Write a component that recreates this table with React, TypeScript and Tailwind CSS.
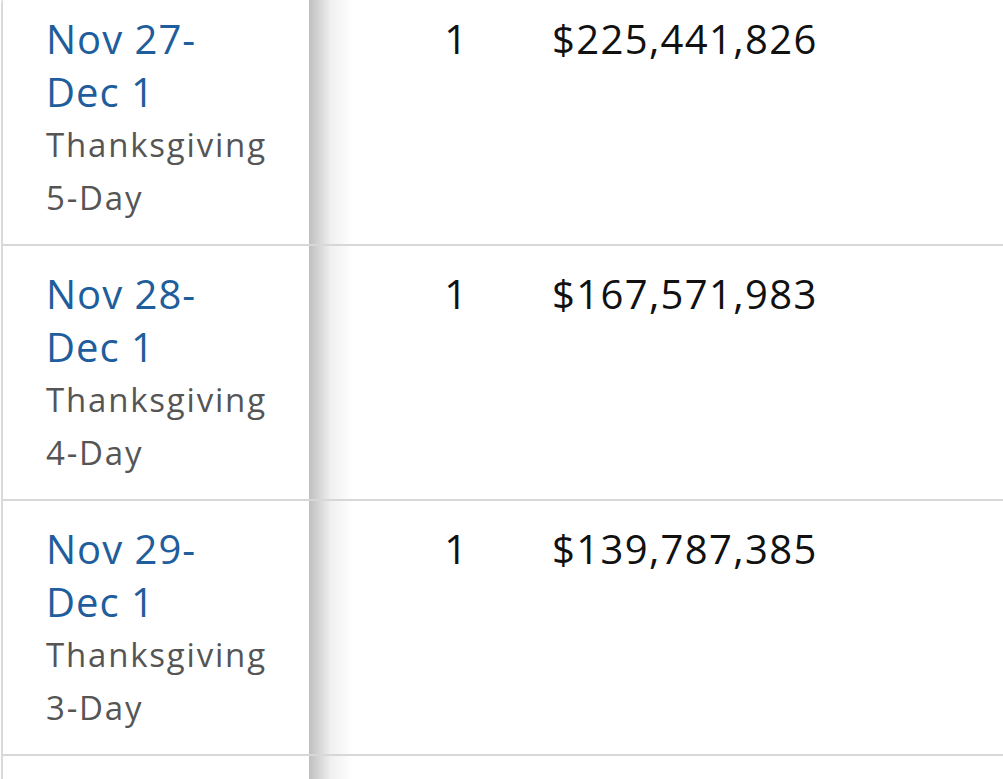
import React from "react";

type Weekend = {
  start: string;
  end: string;
  holiday: string;
  span: string;
  rank: number;
  gross: string;
};

const weekends: Weekend[] = [
  { start: "Nov 27-", end: "Dec 1", holiday: "Thanksgiving", span: "5-Day", rank: 1, gross: "$225,441,826" },
  { start: "Nov 28-", end: "Dec 1", holiday: "Thanksgiving", span: "4-Day", rank: 1, gross: "$167,571,983" },
  { start: "Nov 29-", end: "Dec 1", holiday: "Thanksgiving", span: "3-Day", rank: 1, gross: "$139,787,385" },
];

function WeekendRow({ row }: { row: Weekend }) {
  return (
    <div className="relative flex h-[255px] border-b-2 border-[#d7d7d7]">
      <div className="w-[306px] shrink-0 bg-white pl-[43px] pt-[21px]">
        <a href="#" className="block text-[40px] leading-[53px] tracking-[1px] text-[#1f5e9c]">
          {row.start}
          <br />
          {row.end}
        </a>
        <div className="text-[33px] leading-[53px] tracking-[1.8px] text-[#555555]">
          {row.holiday}
          <br />
          {row.span}
        </div>
      </div>
      <div className="w-[159px] shrink-0 pt-[21px] text-right text-[40px] leading-[53px] tracking-[1px] text-[#111111]">
        {row.rank}
      </div>
      <div className="pl-[84px] pt-[21px] text-[40px] leading-[53px] tracking-[1.35px] text-[#111111]">
        {row.gross}
      </div>
    </div>
  );
}

export default function App() {
  return (
    <div className="h-[779px] overflow-hidden bg-white font-['Open_Sans',sans-serif]">
      <div className="relative ml-px -mt-[11px] rounded-tl-[16px] border-l-2 border-t-2 border-[#d9d9d9]">
        {/* sticky column shadow */}
        <div className="absolute top-0 bottom-0 left-[306px] w-[44px] bg-gradient-to-r from-black/25 via-black/[0.06] to-transparent" />
        {weekends.map((row) => (
          <WeekendRow key={row.start} row={row} />
        ))}
        <div className="relative flex h-[255px]">
          <div className="w-[306px] shrink-0 bg-white" />
        </div>
      </div>
    </div>
  );
}
